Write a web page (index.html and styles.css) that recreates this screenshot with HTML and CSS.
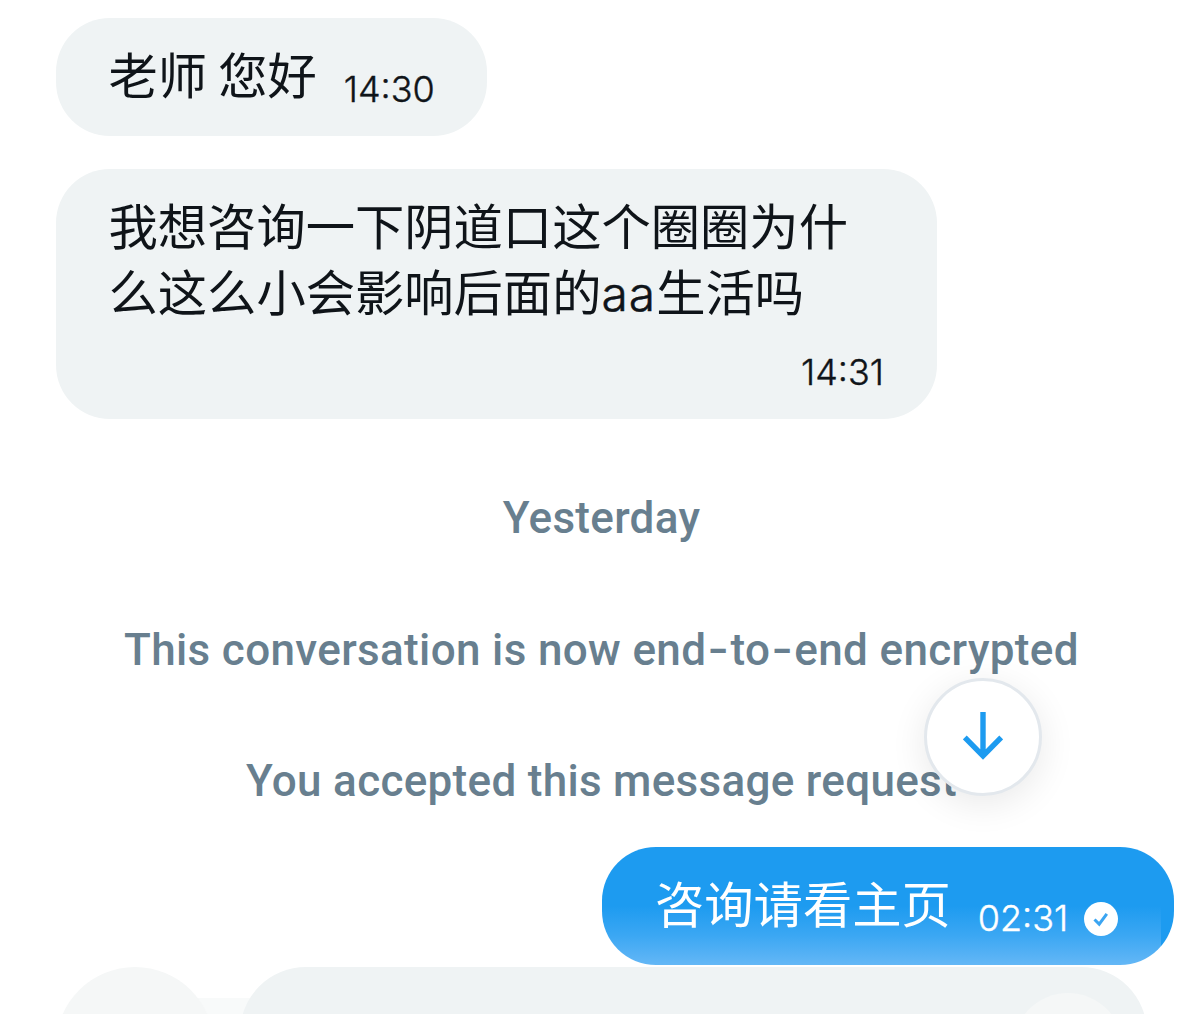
FILE: index.html
```html
<!DOCTYPE html>
<html lang="zh">
<head>
  <meta charset="UTF-8">
  <meta name="viewport" content="width=device-width, initial-scale=1.0">
  <title>Messages</title>
  <link rel="stylesheet" href="styles.css">
</head>
<body>

  <!-- Conversation -->
  <main class="chat">
    <div class="bubble received">
      <p class="text">老师 您好</p>
      <span class="time">14:30</span>
    </div>

    <div class="bubble received long">
      <p class="text">我想咨询一下阴道口这个圈圈为什<br>么这么小会影响后面的<span class="latin">aa</span>生活吗</p>
      <span class="time">14:31</span>
    </div>

    <div class="notices">
      <p class="notice day">Yesterday</p>
      <p class="notice encrypted">This conversation is now end<span class="dash">-</span>to<span class="dash">-</span>end encrypted</p>
      <p class="notice accepted">You accepted this message request</p>
    </div>

    <div class="bubble sent">
      <p class="text">咨询请看主页</p>
      <span class="time">02:31</span>
      <svg class="check" viewBox="0 0 34 34">
        <circle cx="17" cy="17" r="17" fill="#fff"/>
        <path d="M10.5 17.5l4.7 4.6 7.6-10.3" fill="none" stroke="#3ba5f2" stroke-width="3"/>
      </svg>
    </div>
  </main>

  <!-- Scroll to latest -->
  <button class="scroll-down" aria-label="Scroll down">
    <svg viewBox="0 0 40 48">
      <path d="M20 0v44M1.8 25.5L20 43.8l18.2-18.3" fill="none" stroke="#1d9bf0" stroke-width="5.4"/>
    </svg>
  </button>

  <!-- Message composer -->
  <footer class="composer">
    <div class="add"></div>
    <div class="input">
      <div class="voice"></div>
    </div>
  </footer>

</body>
</html>
```

FILE: styles.css
```css
* {
  box-sizing: border-box;
}
body {
  position: relative;
  width: 1200px;
  height: 1014px;
  margin: 0;
  overflow: hidden;
  background-color: #fff;
  color: #0f1419;
  font-family: Inter, "Noto Sans CJK SC", sans-serif;
}
p {
  margin: 0;
}
.chat {
  display: flex;
  flex-direction: column;
  align-items: flex-start;
  height: 967px;
  padding: 18px 26px 0 56px;
}

/* Bubbles */
.bubble {
  display: flex;
  height: 118px;
  padding: 22px 53px 0;
  border-radius: 54px;
}
.received {
  width: 431px;
  background-color: #eff3f4;
}
.text {
  margin-left: -0.5px;
  font-family: "Noto Sans CJK SC", sans-serif;
  font-size: 49.3px;
  line-height: 66px;
  white-space: nowrap;
}
.latin {
  font-family: Inter, sans-serif;
  font-size: 48px;
  font-weight: 350;
  letter-spacing: 1px;
  -webkit-text-stroke: 0.5px currentColor;
}
.time {
  margin: 28px 0 0 27px;
  font-size: 36px;
  font-weight: 350;
  line-height: 42px;
  -webkit-text-stroke: 0.4px currentColor;
}
.long {
  flex-direction: column;
  width: 881px;
  height: 250px;
  margin-top: 33px;
}
.long .time {
  align-self: flex-end;
  margin: 24px 0 0;
}
.sent {
  align-self: flex-end;
  width: 572px;
  margin-top: auto;
  margin-bottom: 2px;
  background: linear-gradient(#1d9bf0 50%, #3ba7f3 75%, #64b7f6) 0 0 / 559px 118px no-repeat #1d9bf0;
  color: #fff;
}
.sent .text {
  margin-left: 0;
}
.check {
  width: 34px;
  height: 34px;
  margin: 33px 0 0 16px;
}

/* Notices */
.notices {
  align-self: stretch;
  margin: 66px -26px 0 -56px;
  color: #687f8f;
  font-family: Roboto, sans-serif;
  font-size: 44px;
  font-weight: 500;
  line-height: 66px;
  letter-spacing: 0.3px;
  text-align: center;
}
.notice {
  height: 66px;
  margin-bottom: 65.5px;
  padding-left: 3px;
}
.encrypted {
  letter-spacing: 0.35px;
}
.dash {
  margin: 0 1px;
  font-family: Inter, sans-serif;
  font-size: 47px;
  line-height: 0;
}
.accepted {
  margin-bottom: 0;
}

.scroll-down {
  position: absolute;
  top: 678px;
  left: 924px;
  display: flex;
  align-items: center;
  justify-content: center;
  width: 118px;
  height: 118px;
  padding: 0 0 2px;
  border: 3px solid #e3e8ed;
  border-radius: 50%;
  background-color: #fff;
  box-shadow: 0 8px 36px rgba(0, 0, 0, 0.09);
}
.scroll-down svg {
  width: 40px;
  height: 48px;
}

/* Composer, cut off by the window edge */
.composer {
  display: flex;
  height: 47px;
  padding-left: 56px;
  overflow: hidden;
  background: linear-gradient(#f8fafa, #f8fafa) 190px 31px / 70px 16px no-repeat;
}
.add {
  flex: none;
  width: 158px;
  height: 158px;
  border-radius: 50%;
  background-color: #f5f7f7;
}
.input {
  display: flex;
  flex: none;
  justify-content: flex-end;
  width: 907px;
  height: 132px;
  margin-left: 26px;
  padding: 26px 24px 0 0;
  border-radius: 66px;
  background-color: #eff3f4;
}
.voice {
  width: 110px;
  height: 110px;
  border-radius: 50%;
  background-color: #f5f7f7;
}
```
